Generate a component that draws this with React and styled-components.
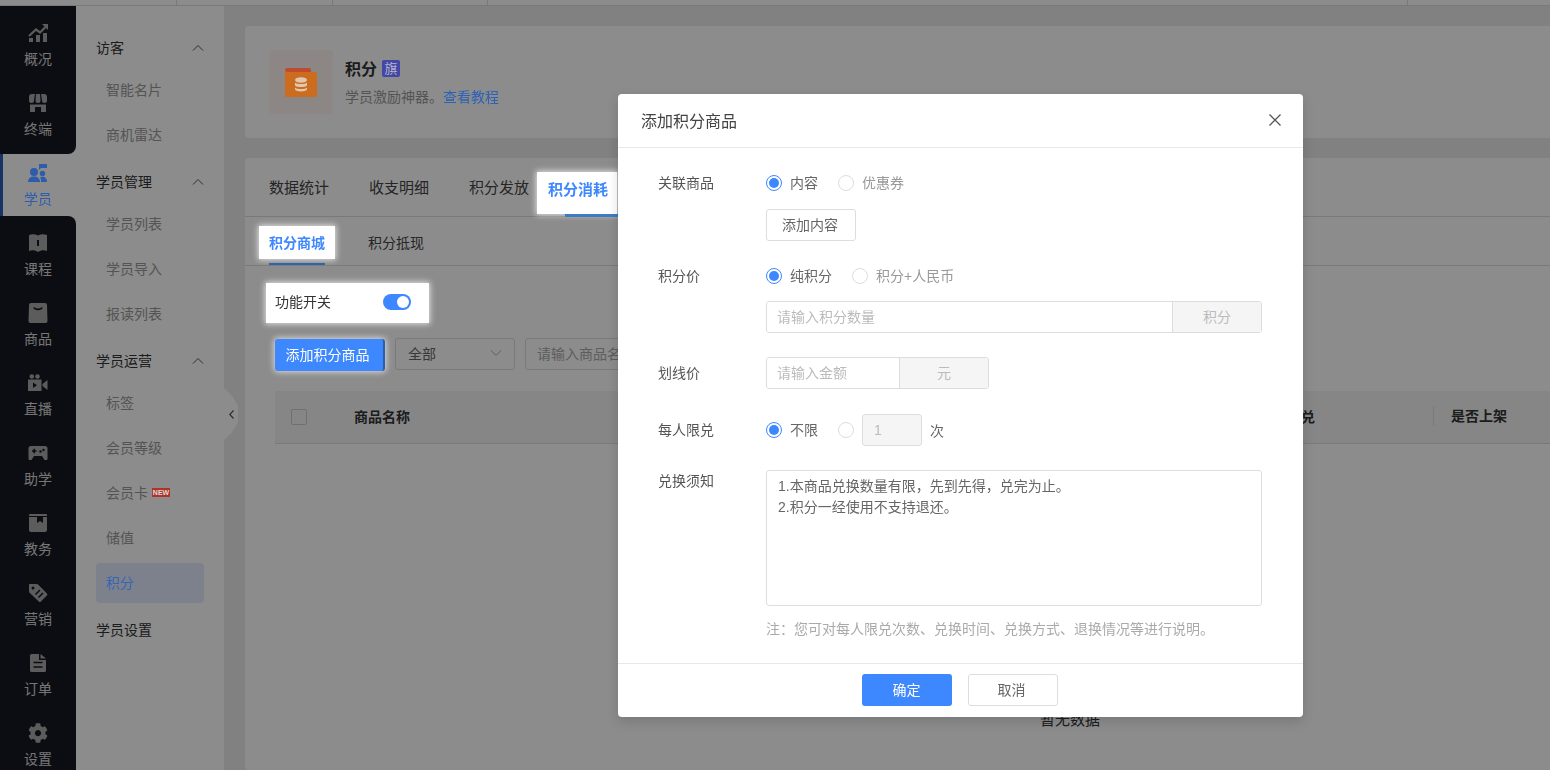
import React from 'react';
import styled, { createGlobalStyle, css } from 'styled-components';
import { FaCog } from 'react-icons/fa';

const GlobalStyle = createGlobalStyle`
  html, body {
    margin: 0;
    height: 100%;
    overflow: hidden;
  }
  body {
    font-family: "Liberation Sans", "Noto Sans CJK SC", sans-serif;
    font-size: 14px;
    color: #333;
  }
  * { box-sizing: border-box; }
`;

// saturated accents keep their colour over the dimming mask
const overMask = css`
  position: relative;
  z-index: 1001;
`;

const Page = styled('div')`
  width: 1550px;
  height: 770px;
  overflow: hidden;
  display: flex;
  flex-direction: column;
  background: #ebebeb;
`;

const TopBar = styled('div')`
  height: 6px;
  flex: none;
  display: flex;
  background: #fff;
  border-bottom: 1px solid #ddd;
`;

const TopCell = styled('div')`
  width: ${p => p.$w}px;
  flex: none;
  border-right: 1px solid #ddd;
`;

const Body = styled('div')`
  flex: 1;
  min-height: 0;
  display: flex;
`;

const Rail = styled('nav')`
  width: 76px;
  flex: none;
  display: flex;
  flex-direction: column;
  background: #fff;
`;

const RailGroup = styled('div')`
  background: #161821;
  padding: 8px 0;
  display: flex;
  flex-direction: column;
  gap: 8px;
  border-radius: ${p => p.$top ? '0 0 8px 0' : '0 8px 0 0'};
  flex: ${p => p.$top ? 'none' : 1};
`;

const RailItem = styled('div')`
  height: 62px;
  flex: none;
  padding-top: 9px;
  display: flex;
  flex-direction: column;
  align-items: center;
  color: #d8d8d8;
  svg {
    color: #a8a8a8;
    width: 20px;
    height: 20px;
    flex: none;
  }
`;

const ActiveRailItem = styled(RailItem)`
  background: #fff;
  color: #2d5cab;
  border-left: 3px solid #2b5fb8;
  padding-right: 3px;
  svg { color: #2d5cab; ${overMask} }
  span { ${overMask} }
`;

const RailLabel = styled('span')`
  margin-top: 6px;
  line-height: 20px;
  font-size: 14px;
`;

const SubNav = styled('aside')`
  width: 148px;
  flex: none;
  background: #fff;
  padding: 21px 20px 0;
  position: relative;
`;

const Collapse = styled('div')`
  position: absolute;
  left: 148px;
  top: 382px;
  width: 14px;
  height: 52px;
  background: #fff;
  clip-path: polygon(0 0, 55% 14%, 100% 34%, 100% 66%, 55% 86%, 0 100%);
  display: flex;
  align-items: center;
  justify-content: center;
  color: #555;
`;

const NavSection = styled('div')`
  margin-bottom: 6px;
`;

const NavHead = styled('div')`
  height: 40px;
  display: flex;
  align-items: center;
  justify-content: space-between;
  color: #333;
  font-size: 14px;
`;

const NavList = styled('div')`
  padding-top: 3px;
  display: flex;
  flex-direction: column;
  gap: 5px;
`;

const NavLink = styled('div')`
  height: 40px;
  padding-left: 10px;
  padding-bottom: 2px;
  display: flex;
  align-items: center;
  gap: 4px;
  border-radius: 4px;
  font-size: 14px;
  color: #999;
`;

const ActiveNavLink = styled(NavLink)`
  background: #e3ebff;
  span {
    ${overMask}
    color: #3565b5;
  }
`;

const NewTag = styled('span')`
  ${overMask}
  width: 18px;
  height: 9px;
  background: #b03328;
  color: #ddd;
  font-size: 7px;
  line-height: 9px;
  font-weight: 700;
  text-align: center;
  margin-top: 1px;
`;

const Main = styled('main')`
  flex: 1;
  min-width: 0;
  padding: 20px 0 0 21px;
  display: flex;
  flex-direction: column;
  gap: 20px;
`;

const Card = styled('section')`
  background: #fff;
  border-radius: 4px 0 0 4px;
`;

const IntroCard = styled(Card)`
  height: 112px;
  flex: none;
  padding: 24px;
  display: flex;
  gap: 12px;
`;

const IconBox = styled('div')`
  width: 64px;
  height: 64px;
  border-radius: 4px;
  background: #fff5f0;
  display: flex;
  align-items: center;
  justify-content: center;
  svg { ${overMask} }
`;

const IntroText = styled('div')`
  padding-top: 7px;
`;

const IntroTitle = styled('div')`
  display: flex;
  align-items: center;
  gap: 5px;
  height: 22px;
  font-size: 16px;
  font-weight: 700;
  color: #333;
`;

const FlagTag = styled('span')`
  ${overMask}
  width: 18px;
  height: 17px;
  background: #4447a8;
  border-radius: 2px;
  color: #b4b4c8;
  font-size: 13px;
  font-weight: 400;
  line-height: 17px;
  text-align: center;
`;

const IntroDesc = styled('div')`
  margin-top: 8px;
  line-height: 20px;
  font-size: 14px;
  color: #999;
  a {
    ${overMask}
    color: #2d62b8;
    text-decoration: none;
  }
`;

const ContentCard = styled(Card)`
  flex: 1;
  min-height: 0;
`;

const TabRow = styled('div')`
  height: 59px;
  padding: 2px 0 0 24px;
  display: flex;
  align-items: center;
  gap: 40px;
  border-bottom: 1px solid #ddd;
  position: relative;
`;

const Tab = styled('div')`
  font-size: 15px;
  line-height: 20px;
  color: #444;
`;

const TabInk = styled('div')`
  ${overMask}
  position: absolute;
  left: 320px;
  bottom: -1px;
  width: 60px;
  height: 3px;
  background: #3d7cc0;
`;

// lifted above the mask, the white plate is drawn behind the text
const Spot = styled('div')`
  position: relative;
  z-index: 1001;
  &::before {
    content: '';
    position: absolute;
    inset: ${p => p.$inset};
    background: #fff;
    box-shadow: 0 0 6px 1px rgba(255, 255, 255, 0.75);
    z-index: -1;
  }
`;

const SpotTab = styled(Spot)`
  margin-left: -21px;
  top: 2px;
  font-size: 15px;
  line-height: 20px;
  font-weight: 700;
  color: #3d87ff;
`;

const SubTabRow = styled('div')`
  height: 49px;
  padding-left: 24px;
  display: flex;
  gap: 43px;
  border-bottom: 1px solid #ddd;
`;

const SubTab = styled('div')`
  height: 48px;
  padding-top: 16px;
  line-height: 20px;
  font-size: 14px;
  color: #444;
  position: relative;
`;

const SubTabInk = styled('div')`
  ${overMask}
  position: absolute;
  left: 0;
  right: 0;
  bottom: 0;
  height: 2px;
  background: #2a66ad;
`;

const SpotSubTab = styled(Spot)`
  font-weight: 700;
  color: #3d87ff;
`;

const Panel = styled('div')`
  padding: 17px 0 0 30px;
`;

const SwitchRow = styled(Spot)`
  width: 136px;
  height: 40px;
  padding-bottom: 2px;
  display: flex;
  align-items: center;
  justify-content: space-between;
  font-size: 14px;
  color: #333;
`;

const SwitchLabel = styled('span')`
  margin-bottom: 2px;
`;

const Toggle = styled('span')`
  width: 28px;
  height: 16px;
  border-radius: 8px;
  background: #3d87ff;
  display: flex;
  justify-content: flex-end;
  align-items: center;
  padding-right: 2px;
  &::after {
    content: '';
    width: 12px;
    height: 12px;
    border-radius: 50%;
    background: #fff;
  }
`;

const Toolbar = styled('div')`
  margin-top: 15px;
  height: 32px;
  display: flex;
  gap: 10px;
`;

const AddButton = styled('div')`
  position: relative;
  z-index: 1001;
  margin-top: 1px;
  width: 110px;
  height: 32px;
  padding: 0 3px 2px 0;
  border-radius: 3px;
  background: #3d87ff;
  border-right: 2px solid #2c5fa8;
  color: #fff;
  font-size: 14px;
  display: flex;
  align-items: center;
  justify-content: center;
  box-shadow: 0 0 6px 1px rgba(255, 255, 255, 0.7);
`;

const SelectBox = styled('div')`
  width: 120px;
  height: 32px;
  padding: 0 12px 2px;
  border: 1px solid #ddd;
  border-radius: 3px;
  display: flex;
  align-items: center;
  justify-content: space-between;
  color: #666;
`;

const SearchBox = styled('div')`
  width: 220px;
  height: 32px;
  padding: 0 11px 2px;
  border: 1px solid #ddd;
  border-radius: 3px;
  display: flex;
  align-items: center;
  color: #aaa;
`;

const Table = styled('div')`
  margin-top: 21px;
  width: 1590px;
`;

const TableHead = styled('div')`
  height: 53px;
  padding-bottom: 2px;
  display: grid;
  grid-template-columns: 79px 933px 146px 1fr;
  align-items: center;
  background: #f5f5f5;
  border-bottom: 1px solid #ddd;
  font-weight: 700;
  color: #333;
  font-size: 14px;
`;

const CheckCell = styled('div')`
  padding-left: 16px;
  display: flex;
`;

const CheckBox = styled('span')`
  width: 16px;
  height: 16px;
  margin-top: 2px;
  border: 1px solid #ccc;
  border-radius: 2px;
  background: #f5f5f5;
`;

const LastCol = styled('div')`
  padding-left: 17px;
  border-left: 1px solid #ddd;
  line-height: 20px;
`;

const EmptyText = styled('div')`
  padding-top: 266px;
  text-align: center;
  font-size: 15px;
  line-height: 20px;
  color: #333;
`;

const Mask = styled('div')`
  position: fixed;
  inset: 0;
  background: rgba(0, 0, 0, 0.45);
  z-index: 1000;
`;

const Modal = styled('div')`
  position: fixed;
  left: 618px;
  top: 94px;
  width: 685px;
  height: 623px;
  z-index: 1002;
  background: #fff;
  border-radius: 4px;
  box-shadow: 0 4px 12px rgba(0, 0, 0, 0.15);
  display: flex;
  flex-direction: column;
`;

const ModalHead = styled('header')`
  height: 54px;
  flex: none;
  padding: 0 21px 2px 23px;
  display: flex;
  align-items: center;
  justify-content: space-between;
  border-bottom: 1px solid #e8e8e8;
  font-size: 16px;
  color: #444;
`;

const ModalBody = styled('div')`
  flex: 1;
  padding: 25px 41px 0 40px;
`;

const FormRow = styled('div')`
  display: grid;
  grid-template-columns: 108px 1fr;
  margin-top: ${p => p.$top ?? 0}px;
`;

const FormLabel = styled('div')`
  line-height: ${p => p.$h}px;
  font-size: 14px;
  color: #555;
`;

const Options = styled('div')`
  display: flex;
  align-items: center;
  gap: 20px;
  height: ${p => p.$h}px;
`;

const Option = styled('label')`
  display: flex;
  align-items: center;
  gap: 8px;
  color: ${p => p.$on ? '#666' : '#999'};
  font-size: 14px;
  line-height: 20px;
`;

const Radio = styled('span')`
  width: 16px;
  height: 16px;
  border-radius: 50%;
  border: 1px solid ${p => p.$on ? '#3d87ff' : '#ddd'};
  display: flex;
  align-items: center;
  justify-content: center;
  flex: none;
  &::after {
    content: '';
    width: 10px;
    height: 10px;
    border-radius: 50%;
    background: ${p => p.$on ? '#3d87ff' : 'transparent'};
  }
`;

const GhostButton = styled('div')`
  width: 90px;
  height: 32px;
  margin-top: ${p => p.$top ?? 0}px;
  padding: 0 2px 2px 0;
  border: 1px solid #ddd;
  border-radius: 3px;
  display: flex;
  align-items: center;
  justify-content: center;
  font-size: 14px;
  color: #666;
  background: #fff;
`;

const InputGroup = styled('div')`
  display: flex;
  width: ${p => p.$w}px;
  height: 32px;
  margin-top: ${p => p.$top ?? 0}px;
  border: 1px solid #ddd;
  border-radius: 3px;
  overflow: hidden;
`;

const TextInput = styled('input')`
  flex: 1;
  min-width: 0;
  border: 0;
  outline: 0;
  padding: 0 10px;
  font: inherit;
  color: #666;
  &::placeholder { color: #bbb; }
`;

const Addon = styled('div')`
  width: ${p => p.$w}px;
  flex: none;
  padding-bottom: 2px;
  background: #f5f5f5;
  border-left: 1px solid #ddd;
  display: flex;
  align-items: center;
  justify-content: center;
  color: #bbb;
`;

const CountBox = styled('div')`
  width: 60px;
  height: 32px;
  margin-left: -12px;
  padding-left: 11px;
  background: #f5f5f5;
  border: 1px solid #ddd;
  border-radius: 3px;
  color: #bbb;
  line-height: 30px;
`;

const CountUnit = styled('span')`
  margin-left: -12px;
  color: #666;
`;

const NoticeArea = styled('textarea')`
  display: block;
  width: 496px;
  height: 136px;
  padding: 5px 11px;
  border: 1px solid #ddd;
  border-radius: 3px;
  outline: 0;
  resize: none;
  font: inherit;
  line-height: 21px;
  color: #666;
`;

const Note = styled('div')`
  margin: 13px 0 0 108px;
  line-height: 20px;
  color: #aaa;
  white-space: nowrap;
`;

const ModalFoot = styled('footer')`
  height: 54px;
  flex: none;
  border-top: 1px solid #e8e8e8;
  padding: 10px 2px 0 0;
  display: flex;
  justify-content: center;
  gap: 16px;
`;

const PrimaryButton = styled('div')`
  width: 90px;
  height: 32px;
  padding-bottom: 2px;
  border-radius: 3px;
  background: #3d87ff;
  color: #fff;
  font-size: 14px;
  display: flex;
  align-items: center;
  justify-content: center;
`;

const Chevron = ({ up }) => (
  <svg width="12" height="7" viewBox="0 0 12 7" fill="none" stroke={up ? '#555' : '#aaa'} strokeWidth="1">
    <path d={up ? 'M1 6.5 6 1.5 11 6.5' : 'M1 .5 6 5.5 11 .5'} />
  </svg>
);

const icons = {
  chart: (
    <svg viewBox="0 0 20 20" fill="currentColor">
      <rect x="1" y="15" width="4" height="4" />
      <rect x="8" y="12" width="4" height="7" />
      <rect x="15" y="10" width="4" height="9" />
      <path d="M1 13 8 6.5l4 3L17.5 4" fill="none" stroke="currentColor" strokeWidth="2.2" />
      <path d="M14 1h6v6z" />
    </svg>
  ),
  store: (
    <svg viewBox="0 0 20 20" fill="currentColor">
      <path d="M4 1h3L6 7.5a2.5 2.5 0 0 1-5 0V4a3 3 0 0 1 3-3zM8 1h4l.5 6.5a2.5 2.5 0 0 1-5 0zM13 1h3a3 3 0 0 1 3 3v3.5a2.5 2.5 0 0 1-5 0z" />
      <path d="M2 11.5h16V19h-5v-5H7v5H2z" />
    </svg>
  ),
  student: (
    <svg viewBox="0 0 20 20" fill="currentColor">
      <path d="M11 1h8v4h-6l-2 2z" />
      <circle cx="6" cy="9" r="4" />
      <path d="M0 19c0-3.500 2.500-5.500 6-5.500s6 2 6 5.500z" />
      <circle cx="14.500" cy="10.500" r="2.700" />
      <path d="M13 19c.3-2-.2-3.500-1-4.500 1-.6 1.800-.8 2.700-.8 2.700 0 4.300 2 4.300 5.300z" />
    </svg>
  ),
  book: (
    <svg viewBox="0 0 20 20" fill="currentColor" fillRule="evenodd">
      <path d="M1 2c3-1 6-1 9 .5 3-1.500 6-1.500 9-.5v16c-3-1-6-1-9 1-3-2-6-2-9-1zM9 7v6h2V7z" />
    </svg>
  ),
  bag: (
    <svg viewBox="0 0 20 20" fill="currentColor" fillRule="evenodd">
      <path d="M3 0h14a2 2 0 0 1 2 2l.500 16a2 2 0 0 1-2 2H2.500a2 2 0 0 1-2-2L1 2a2 2 0 0 1 2-2z" />
      <path d="M6 4.500c1 2.500 7 2.500 8 0" fill="none" stroke="#161821" strokeWidth="1.800" />
    </svg>
  ),
  live: (
    <svg viewBox="0 0 20 20" fill="currentColor">
      <circle cx="3.800" cy="3.500" r="2.300" />
      <circle cx="9.500" cy="3.500" r="2.300" />
      <path d="M0 6.500h13.500V18H0zM14.500 11l5-4v10l-5-4z" />
      <path d="M5 9.500 9 12.300 5 15z" fill="#161821" />
    </svg>
  ),
  pad: (
    <svg viewBox="0 0 20 20" fill="currentColor">
      <path d="M3 3h14a2.500 2.500 0 0 1 2.500 2.500V16a1 1 0 0 1-1 1h-2l-2.500-4H6l-2.500 4h-2a1 1 0 0 1-1-1V5.500A2.500 2.500 0 0 1 3 3z" />
      <path d="M4 8h4.500M6.200 5.800v4.500" stroke="#161821" strokeWidth="1.500" />
      <circle cx="12.500" cy="8.500" r="1.200" fill="#161821" />
      <circle cx="15.500" cy="7" r="1.200" fill="#161821" />
    </svg>
  ),
  ledger: (
    <svg viewBox="0 0 20 20" fill="currentColor">
      <path d="M2 1h16a1 1 0 0 1 1 1v15a2 2 0 0 1-2 2H3a2 2 0 0 1-2-2V2a1 1 0 0 1 1-1z" />
      <path d="M1 3.500h18" stroke="#161821" strokeWidth="1" />
      <path d="M9 3.500h6V10l-3-2-3 2z" fill="#161821" />
    </svg>
  ),
  tag: (
    <svg viewBox="0 0 20 20" fill="currentColor">
      <path d="M1.500 1h7.200a2 2 0 0 1 1.400.6l8.800 8.800a1.500 1.500 0 0 1 0 2.100l-6 6a1.500 1.500 0 0 1-2.100 0L1.600 9.700A2 2 0 0 1 1 8.300V1.500z" />
      <circle cx="5" cy="5" r="1.500" fill="#161821" />
      <path d="M7.500 11.500 12 7M10.500 14.500 15 10" stroke="#161821" strokeWidth="1.500" />
    </svg>
  ),
  doc: (
    <svg viewBox="0 0 20 20" fill="currentColor">
      <path d="M3.500 1H11v6h7v10.500a1.500 1.500 0 0 1-1.500 1.500h-13A1.500 1.500 0 0 1 2 17.500v-15A1.500 1.500 0 0 1 3.500 1z" />
      <path d="M12.500 1 18 5.500h-5.500z" />
      <path d="M5.500 9.500h9M5.500 14h9" stroke="#161821" strokeWidth="1.700" />
    </svg>
  ),
};

const railTop = [['chart', '概况'], ['store', '终端']];
const railBottom = [
  ['book', '课程'], ['bag', '商品'], ['live', '直播'], ['pad', '助学'],
  ['ledger', '教务'], ['tag', '营销'], ['doc', '订单'],
];

const navGroups = [
  { title: '访客', links: ['智能名片', '商机雷达'] },
  { title: '学员管理', links: ['学员列表', '学员导入', '报读列表'] },
  { title: '学员运营', links: ['标签', '会员等级', '会员卡', '储值', '积分'] },
  { title: '学员设置', links: [] },
];

const PointsIcon = () => (
  <svg width="32" height="29" viewBox="0 0 32 29">
    <path d="M2 0h22a2 2 0 0 1 2 2v6H0V2a2 2 0 0 1 2-2z" fill="#bf4a30" />
    <path d="M2 4h28a2 2 0 0 1 2 2v21a2 2 0 0 1-2 2H2a2 2 0 0 1-2-2V2z" fill="#cc6c1e" />
    <ellipse cx="16" cy="12" rx="6" ry="2.700" fill="#e0c8ae" />
    <path d="M10 14.500c1.500 2 10.500 2 12 0v3c-1.500 2-10.500 2-12 0z" fill="#e0c8ae" />
    <path d="M10 19.500c1.500 2 10.500 2 12 0v2c-1.500 2.500-10.500 2.500-12 0z" fill="#e0c8ae" />
  </svg>
);

export default function App() {
  return (
    <Page>
      <GlobalStyle />
      <TopBar>
        <TopCell $w={177} />
        <TopCell $w={156} />
        <TopCell $w={155} />
        <TopCell $w={920} />
      </TopBar>
      <Body>
        <Rail>
          <RailGroup $top>
            {railTop.map(([icon, label]) => (
              <RailItem key={label}>{icons[icon]}<RailLabel>{label}</RailLabel></RailItem>
            ))}
          </RailGroup>
          <ActiveRailItem>{icons.student}<RailLabel>学员</RailLabel></ActiveRailItem>
          <RailGroup>
            {railBottom.map(([icon, label]) => (
              <RailItem key={label}>{icons[icon]}<RailLabel>{label}</RailLabel></RailItem>
            ))}
            <RailItem><FaCog /><RailLabel>设置</RailLabel></RailItem>
          </RailGroup>
        </Rail>

        <SubNav>
          {navGroups.map(group => (
            <NavSection key={group.title}>
              <NavHead>
                {group.title}
                {group.links.length > 0 && <Chevron up />}
              </NavHead>
              {group.links.length > 0 && (
                <NavList>
                  {group.links.map(link => link === '积分' ? (
                    <ActiveNavLink key={link}><span>{link}</span></ActiveNavLink>
                  ) : (
                    <NavLink key={link}>
                      {link}
                      {link === '会员卡' && <NewTag>NEW</NewTag>}
                    </NavLink>
                  ))}
                </NavList>
              )}
            </NavSection>
          ))}
          <Collapse>
            <svg width="5" height="9" viewBox="0 0 5 9" fill="none" stroke="currentColor" strokeWidth="1.200">
              <path d="M4.500 .5 .8 4.500l3.700 4" />
            </svg>
          </Collapse>
        </SubNav>

        <Main>
          <IntroCard>
            <IconBox><PointsIcon /></IconBox>
            <IntroText>
              <IntroTitle>积分<FlagTag>旗</FlagTag></IntroTitle>
              <IntroDesc>学员激励神器。<a href="#tutorial">查看教程</a></IntroDesc>
            </IntroText>
          </IntroCard>

          <ContentCard>
            <TabRow>
              <Tab>数据统计</Tab>
              <Tab>收支明细</Tab>
              <Tab>积分发放</Tab>
              <SpotTab $inset="-8px -9px -14px -11px">积分消耗</SpotTab>
              <TabInk />
            </TabRow>
            <SubTabRow>
              <SubTab><SpotSubTab $inset="-7px -10px -6px -10px">积分商城</SpotSubTab><SubTabInk /></SubTab>
              <SubTab>积分抵现</SubTab>
            </SubTabRow>
            <Panel>
              <SwitchRow $inset="0 -18px 0 -9px"><SwitchLabel>功能开关</SwitchLabel><Toggle /></SwitchRow>
              <Toolbar>
                <AddButton>添加积分商品</AddButton>
                <SelectBox>全部<Chevron /></SelectBox>
                <SearchBox>请输入商品名称</SearchBox>
              </Toolbar>
              <Table>
                <TableHead>
                  <CheckCell><CheckBox /></CheckCell>
                  <div>商品名称</div>
                  <div>已兑</div>
                  <LastCol>是否上架</LastCol>
                </TableHead>
                <EmptyText>暂无数据</EmptyText>
              </Table>
            </Panel>
          </ContentCard>
        </Main>
      </Body>

      <Mask />
      <Modal>
        <ModalHead>
          添加积分商品
          <svg width="14" height="14" viewBox="0 0 14 14" stroke="#555" strokeWidth="1.300">
            <path d="M1.500 1.500 12.500 12.500M12.500 1.500 1.500 12.500" />
          </svg>
        </ModalHead>
        <ModalBody>
          <FormRow>
            <FormLabel $h={20}>关联商品</FormLabel>
            <div>
              <Options $h={20}>
                <Option $on><Radio $on />内容</Option>
                <Option><Radio />优惠券</Option>
              </Options>
              <GhostButton $top={16}>添加内容</GhostButton>
            </div>
          </FormRow>
          <FormRow $top={25}>
            <FormLabel $h={20}>积分价</FormLabel>
            <div>
              <Options $h={20}>
                <Option $on><Radio $on />纯积分</Option>
                <Option><Radio />积分+人民币</Option>
              </Options>
              <InputGroup $w={496} $top={15}>
                <TextInput placeholder="请输入积分数量" readOnly />
                <Addon $w={89}>积分</Addon>
              </InputGroup>
            </div>
          </FormRow>
          <FormRow $top={24}>
            <FormLabel $h={32}>划线价</FormLabel>
            <InputGroup $w={223}>
              <TextInput placeholder="请输入金额" readOnly />
              <Addon $w={89}>元</Addon>
            </InputGroup>
          </FormRow>
          <FormRow $top={25}>
            <FormLabel $h={32}>每人限兑</FormLabel>
            <Options $h={32}>
              <Option $on><Radio $on />不限</Option>
              <Option><Radio /></Option>
              <CountBox>1</CountBox>
              <CountUnit>次</CountUnit>
            </Options>
          </FormRow>
          <FormRow $top={24}>
            <FormLabel $h={22}>兑换须知</FormLabel>
            <NoticeArea readOnly defaultValue={'1.本商品兑换数量有限，先到先得，兑完为止。\n2.积分一经使用不支持退还。'} />
          </FormRow>
          <Note>注：您可对每人限兑次数、兑换时间、兑换方式、退换情况等进行说明。</Note>
        </ModalBody>
        <ModalFoot>
          <PrimaryButton>确定</PrimaryButton>
          <GhostButton>取消</GhostButton>
        </ModalFoot>
      </Modal>
    </Page>
  );
}
